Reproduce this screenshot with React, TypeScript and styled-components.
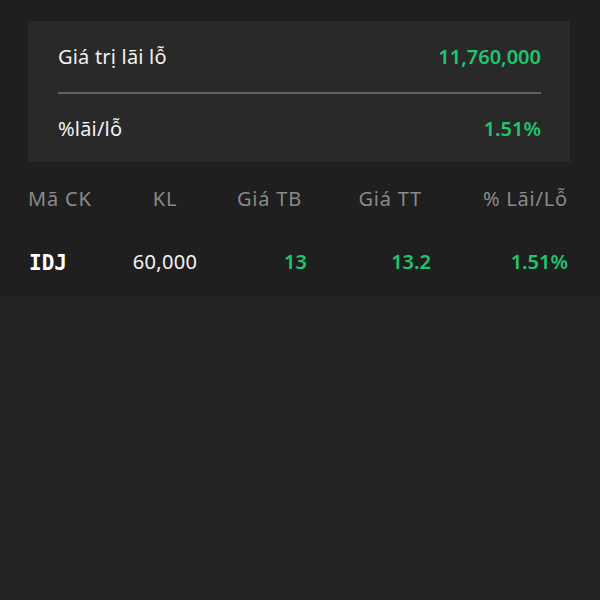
import React from 'react';
import styled, { createGlobalStyle } from 'styled-components';

const GlobalStyle = createGlobalStyle`
  html, body {
    margin: 0;
    padding: 0;
    background: #232323;
  }
  body {
    font-family: 'Noto Sans', 'Open Sans', sans-serif;
    -webkit-font-smoothing: antialiased;
  }
`;

const summary = [
  { label: 'Giá trị lãi lỗ', value: '11,760,000', height: 71 },
  { label: '%lãi/lỗ', value: '1.51%', height: 68 }
];

const columns = [
  { title: 'Mã CK', align: 'left', headPad: 0 },
  { title: 'KL', align: 'center', headPad: 0 },
  { title: 'Giá TB', align: 'right', headPad: 6 },
  { title: 'Giá TT', align: 'right', headPad: 9 },
  { title: '% Lãi/Lỗ', align: 'right', headPad: 2 }
];

const rows = [{ code: 'IDJ', volume: '60,000', avg: '13', market: '13.2', pct: '1.51%' }];

const App = () => {
  return (
    <>
      <GlobalStyle />
      <Panel>
        <SummaryCard>
          <SummaryRow $height={summary[0].height}>
            <SummaryLabel>{summary[0].label}</SummaryLabel>
            <GreenValue>{summary[0].value}</GreenValue>
          </SummaryRow>
          <Divider />
          <SummaryRow $height={summary[1].height}>
            <SummaryLabel>{summary[1].label}</SummaryLabel>
            <GreenValue>{summary[1].value}</GreenValue>
          </SummaryRow>
        </SummaryCard>

        <Table>
          <HeadRow>
            {columns.map((c) => (
              <HeadCell key={c.title} $align={c.align} $pad={c.headPad}>
                {c.title}
              </HeadCell>
            ))}
          </HeadRow>
          {rows.map((r) => (
            <DataRow key={r.code}>
              <CodeCell $align="left" $pad={1}>
                <Code>{r.code}</Code>
              </CodeCell>
              <Cell $align="center" $pad={0}>
                <Plain>{r.volume}</Plain>
              </Cell>
              <Cell $align="right" $pad={1}>
                <GreenValue>{r.avg}</GreenValue>
              </Cell>
              <Cell $align="right" $pad={0}>
                <GreenValue>{r.market}</GreenValue>
              </Cell>
              <Cell $align="right" $pad={2}>
                <GreenValue>{r.pct}</GreenValue>
              </Cell>
            </DataRow>
          ))}
        </Table>
      </Panel>
    </>
  );
};

export default App;

interface RowProps {
  $height: number;
}

interface CellProps {
  $align: string;
  $pad: number;
}

const Panel = styled.div`
  background: #1f1f1f;
  padding: 21px 30px 8px 28px;
`;

const SummaryCard = styled.div`
  background: #292929;
  padding: 0 29px 0 30px;
  display: flex;
  flex-direction: column;
`;

const SummaryRow = styled.div<RowProps>`
  height: ${(p) => p.$height}px;
  display: flex;
  align-items: center;
  justify-content: space-between;
`;

const SummaryLabel = styled.span`
  font-size: 20px;
  font-weight: 400;
  letter-spacing: 0.2px;
  color: #f2f2f2;
`;

const GreenValue = styled.span`
  font-size: 20px;
  font-weight: 600;
  color: #22c46e;
`;

const Divider = styled.div`
  height: 2px;
  background: #626262;
`;

const Table = styled.div`
  display: flex;
  flex-direction: column;
`;

const gridCols = '90px 94px 96px 123px 1fr';

const HeadRow = styled.div`
  display: grid;
  grid-template-columns: ${gridCols};
  height: 72px;
  align-items: center;
`;

const DataRow = styled.div`
  display: grid;
  grid-template-columns: ${gridCols};
  height: 54px;
  align-items: center;
`;

const HeadCell = styled.div<CellProps>`
  text-align: ${(p) => p.$align};
  padding-right: ${(p) => (p.$align === 'right' ? p.$pad : 0)}px;
  padding-left: ${(p) => (p.$align === 'left' ? p.$pad : 0)}px;
  font-size: 20px;
  letter-spacing: 0.8px;
  color: #8a8a8a;
  white-space: nowrap;
`;

const Cell = styled.div<CellProps>`
  text-align: ${(p) => p.$align};
  padding-right: ${(p) => (p.$align === 'right' ? p.$pad : 0)}px;
  padding-left: ${(p) => (p.$align === 'left' ? p.$pad : 0)}px;
  white-space: nowrap;
`;

const CodeCell = styled(Cell)`
  padding-top: 3px;
`;

const Code = styled.span`
  font-family: 'DejaVu Sans Mono', monospace;
  font-size: 21px;
  font-weight: 700;
  color: #ffffff;
`;

const Plain = styled.span`
  font-size: 20px;
  letter-spacing: 0.3px;
  color: #f4f4f4;
`;
